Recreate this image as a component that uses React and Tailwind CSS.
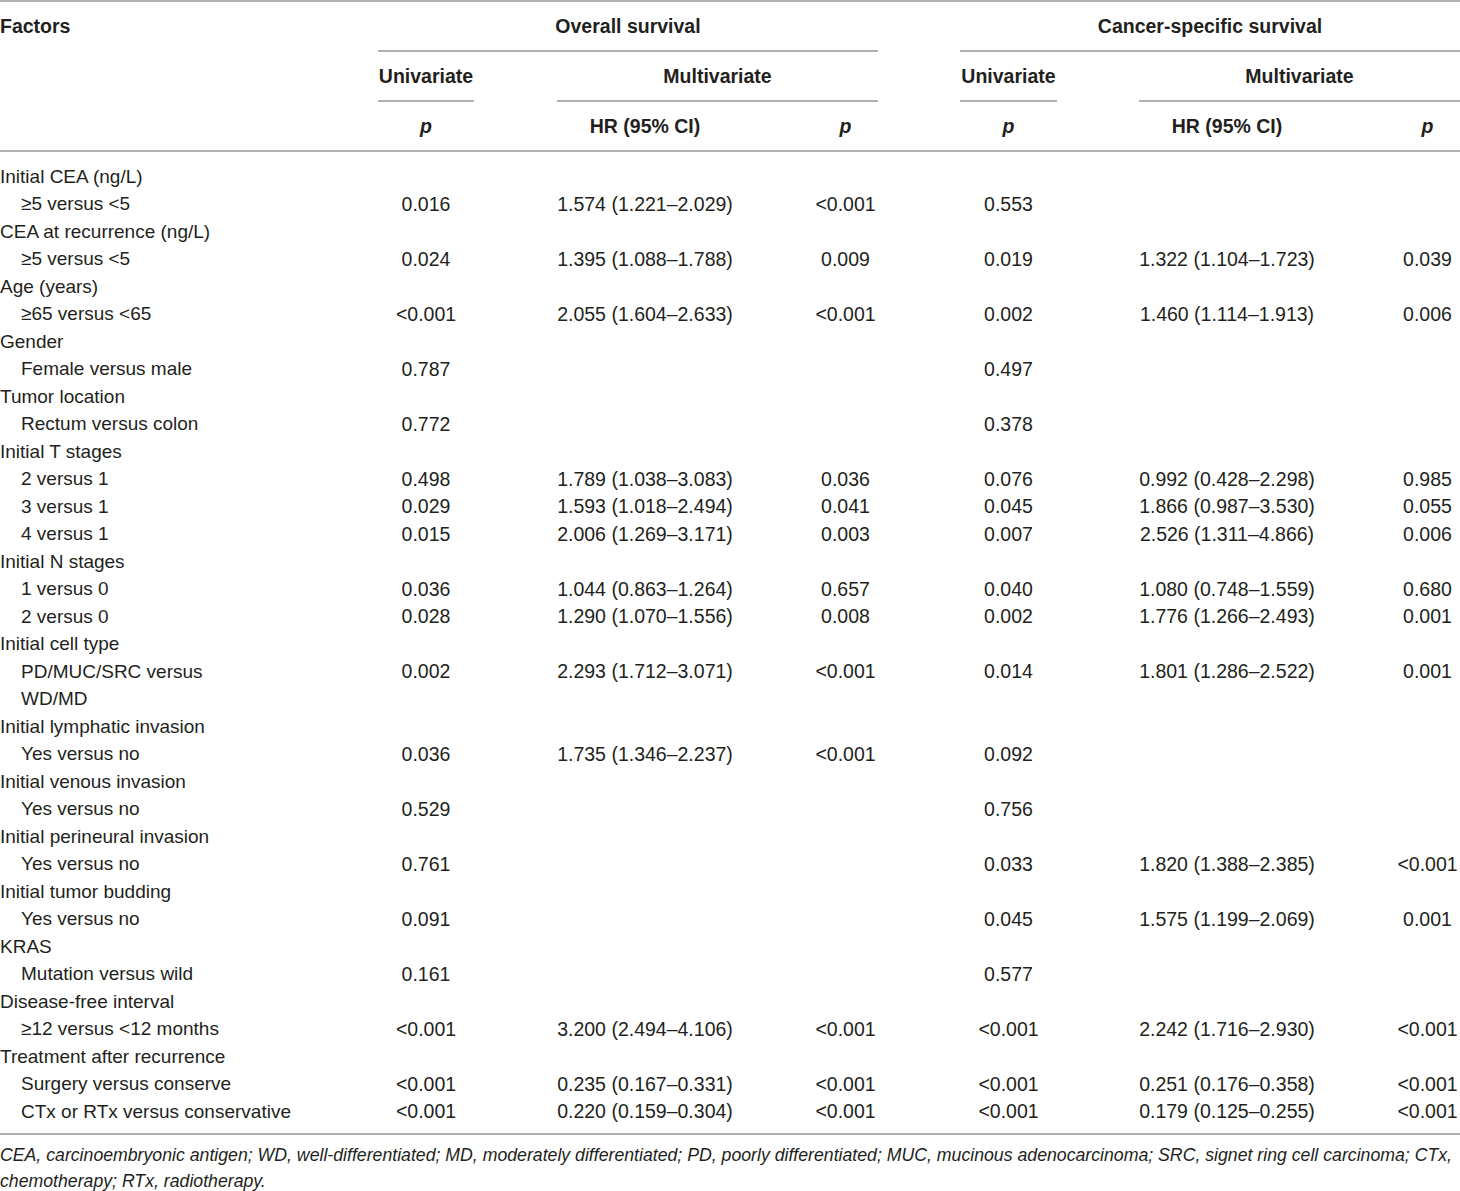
import React from 'react';

const rows = [
  ['Initial CEA (ng/L)'],
  ['≥5 versus <5', '0.016', '1.574 (1.221–2.029)', '<0.001', '0.553', '', ''],
  ['CEA at recurrence (ng/L)'],
  ['≥5 versus <5', '0.024', '1.395 (1.088–1.788)', '0.009', '0.019', '1.322 (1.104–1.723)', '0.039'],
  ['Age (years)'],
  ['≥65 versus <65', '<0.001', '2.055 (1.604–2.633)', '<0.001', '0.002', '1.460 (1.114–1.913)', '0.006'],
  ['Gender'],
  ['Female versus male', '0.787', '', '', '0.497', '', ''],
  ['Tumor location'],
  ['Rectum versus colon', '0.772', '', '', '0.378', '', ''],
  ['Initial T stages'],
  ['2 versus 1', '0.498', '1.789 (1.038–3.083)', '0.036', '0.076', '0.992 (0.428–2.298)', '0.985'],
  ['3 versus 1', '0.029', '1.593 (1.018–2.494)', '0.041', '0.045', '1.866 (0.987–3.530)', '0.055'],
  ['4 versus 1', '0.015', '2.006 (1.269–3.171)', '0.003', '0.007', '2.526 (1.311–4.866)', '0.006'],
  ['Initial N stages'],
  ['1 versus 0', '0.036', '1.044 (0.863–1.264)', '0.657', '0.040', '1.080 (0.748–1.559)', '0.680'],
  ['2 versus 0', '0.028', '1.290 (1.070–1.556)', '0.008', '0.002', '1.776 (1.266–2.493)', '0.001'],
  ['Initial cell type'],
  ['PD/MUC/SRC versus', '0.002', '2.293 (1.712–3.071)', '<0.001', '0.014', '1.801 (1.286–2.522)', '0.001'],
  ['WD/MD', '', '', '', '', '', ''],
  ['Initial lymphatic invasion'],
  ['Yes versus no', '0.036', '1.735 (1.346–2.237)', '<0.001', '0.092', '', ''],
  ['Initial venous invasion'],
  ['Yes versus no', '0.529', '', '', '0.756', '', ''],
  ['Initial perineural invasion'],
  ['Yes versus no', '0.761', '', '', '0.033', '1.820 (1.388–2.385)', '<0.001'],
  ['Initial tumor budding'],
  ['Yes versus no', '0.091', '', '', '0.045', '1.575 (1.199–2.069)', '0.001'],
  ['KRAS'],
  ['Mutation versus wild', '0.161', '', '', '0.577', '', ''],
  ['Disease-free interval'],
  ['≥12 versus <12 months', '<0.001', '3.200 (2.494–4.106)', '<0.001', '<0.001', '2.242 (1.716–2.930)', '<0.001'],
  ['Treatment after recurrence'],
  ['Surgery versus conserve', '<0.001', '0.235 (0.167–0.331)', '<0.001', '<0.001', '0.251 (0.176–0.358)', '<0.001'],
  ['CTx or RTx versus conservative', '<0.001', '0.220 (0.159–0.304)', '<0.001', '<0.001', '0.179 (0.125–0.255)', '<0.001'],
];

const grid =
  'grid grid-cols-[378px_96px_83px_176px_80px_65px_82px_97px_82px_176px_80px_65px]';

// header cell: 48px of content + 2px rule (transparent where there is no rule)
const Head = ({ children, span = '', line = false, left = false }) => (
  <div
    className={`${span} h-[50px] pt-[2px] flex items-center border-b-2 ${
      line ? 'border-[#b0b0b0]' : 'border-transparent'
    } ${left ? 'justify-start' : 'justify-center'} font-bold whitespace-nowrap`}
  >
    {children}
  </div>
);

const P = () => <span className="italic">p</span>;

const App = () => {
  return (
    <div
      className="w-[1460px] bg-white text-[#231f20] text-[19.5px]"
      style={{ fontFamily: '"Liberation Sans", Arial, sans-serif' }}
    >
      <div className="border-t-2 border-[#b0b0b0]">
        {/* header */}
        <div className={grid}>
          <Head left>Factors</Head>
          <Head span="col-span-5" line>Overall survival</Head>
          <Head />
          <Head span="col-span-5" line>Cancer-specific survival</Head>

          <Head />
          <Head line>Univariate</Head>
          <Head />
          <Head span="col-span-3" line>Multivariate</Head>
          <Head />
          <Head line>Univariate</Head>
          <Head />
          <Head span="col-span-3" line>Multivariate</Head>
        </div>
        <div className={`${grid} border-b-2 border-[#b0b0b0]`}>
          <div className="h-[48px]" />
          <div className="h-[48px] pt-[2px] flex items-center justify-center font-bold"><P /></div>
          <div />
          <div className="h-[48px] pt-[2px] flex items-center justify-center font-bold whitespace-nowrap">HR (95% CI)</div>
          <div />
          <div className="h-[48px] pt-[2px] flex items-center justify-center font-bold"><P /></div>
          <div />
          <div className="h-[48px] pt-[2px] flex items-center justify-center font-bold"><P /></div>
          <div />
          <div className="h-[48px] pt-[2px] flex items-center justify-center font-bold whitespace-nowrap">HR (95% CI)</div>
          <div />
          <div className="h-[48px] pt-[2px] flex items-center justify-center font-bold"><P /></div>
        </div>

        {/* body */}
        <div className="pt-[11px] pb-[7px] border-b-2 border-[#b0b0b0]">
          {rows.map((r, i) => {
            const sub = r.length > 1;
            const cell = 'h-[27.5px] flex items-center justify-center whitespace-nowrap';
            return (
              <div key={i} className={grid}>
                <div className={`h-[27.5px] flex items-center whitespace-nowrap text-[19px] ${sub ? 'pl-[21px]' : ''}`}>
                  {r[0]}
                </div>
                <div className={cell}>{r[1]}</div>
                <div />
                <div className={cell}>{r[2]}</div>
                <div />
                <div className={cell}>{r[3]}</div>
                <div />
                <div className={cell}>{r[4]}</div>
                <div />
                <div className={cell}>{r[5]}</div>
                <div />
                <div className={cell}>{r[6]}</div>
              </div>
            );
          })}
        </div>

        {/* footnote */}
        <p className="pt-[7px] italic text-[17.7px] leading-[26px]">
          <span className="whitespace-nowrap">
            CEA, carcinoembryonic antigen; WD, well-differentiated; MD, moderately differentiated; PD, poorly
            differentiated; MUC, mucinous adenocarcinoma; SRC, signet ring cell carcinoma; CTx,
          </span>
          <br />
          chemotherapy; RTx, radiotherapy.
        </p>
      </div>
    </div>
  );
};

export default App;
